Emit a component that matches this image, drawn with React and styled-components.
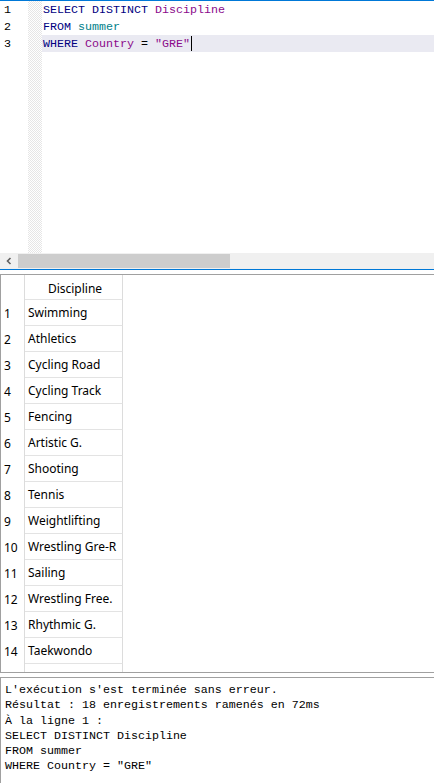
import React from "react";
import styled, { createGlobalStyle } from "styled-components";

const Global = createGlobalStyle`
  html, body { margin: 0; padding: 0; background: #fff; }
  body { width: 434px; height: 783px; overflow: hidden; }
  #root { width: 434px; height: 783px; }
`;

const Page = styled.div`
  width: 434px;
  height: 783px;
  display: flex;
  flex-direction: column;
  background: #fff;
`;

const EditorFrame = styled.div`
  height: 270px;
  box-sizing: border-box;
  border-top: 1px solid #0078d7;
  border-bottom: 1px solid #0078d7;
  display: flex;
  flex-direction: column;
`;

const CodeArea = styled.div`
  height: 252px;
  display: flex;
  overflow: hidden;
`;

const Gutter = styled.div`
  width: 28px;
  flex: none;
  background: #fff;
`;

const FoldMargin = styled.div`
  width: 14px;
  flex: none;
  background: repeating-conic-gradient(#e6e6e6 0 25%, #fff 0 50%) 0 0 / 2px 2px;
`;

const Mono = `
  font-family: "Liberation Mono", "Courier New", monospace;
  font-size: 11.66px;
`;

const LineNo = styled.div`
  ${Mono}
  height: 17px;
  line-height: 18px;
  padding-left: 4px;
  color: #000;
`;

const Code = styled.div`
  flex: 1;
  display: flex;
  flex-direction: column;
`;

const CodeLine = styled.div`
  ${Mono}
  height: 17px;
  line-height: 18px;
  padding-left: 1px;
  white-space: pre;
  color: #000;
  background: ${(p) => (p.$active ? "#eaeaf2" : "transparent")};
`;

const Tok = styled.span`
  color: ${(p) =>
    p.$k === "kw" ? "#00007f" : p.$k === "id" ? "#8b0a8b" : p.$k === "tbl" ? "#00808a" : p.$k === "str" ? "#8b0a8b" : "#000"};
`;

const Caret = styled.span`
  display: inline-block;
  width: 1px;
  height: 15px;
  margin-left: 1px;
  vertical-align: -4px;
  background: #000;
`;

const HScroll = styled.div`
  height: 16px;
  background: #f0f0f0;
  display: flex;
  align-items: stretch;
`;

const ArrowBtn = styled.div`
  width: 18px;
  flex: none;
  display: flex;
  align-items: center;
  justify-content: center;
`;

const Thumb = styled.div`
  width: 212px;
  margin: 1px 0;
  background: #cdcdcd;
`;

const Splitter = styled.div`
  height: 4px;
  flex: none;
`;

const GridPanel = styled.div`
  height: 399px;
  box-sizing: border-box;
  border-top: 1px solid #a0a0a0;
  border-bottom: 1px solid #a0a0a0;
  border-left: 1px solid #a0a0a0;
  overflow: hidden;
  font-family: "Noto Sans", "DejaVu Sans", sans-serif;
  font-size: 12px;
  color: #000;
`;

const GridRow = styled.div`
  display: grid;
  grid-template-columns: 24px 98px;
  height: ${(p) => (p.$header ? "25px" : "26px")};
`;

const RowHead = styled.div`
  box-sizing: border-box;
  border-right: 1px solid #dcdcdc;
  padding-left: 3px;
  display: flex;
  align-items: center;
`;

const Cell = styled.div`
  box-sizing: border-box;
  border-right: 1px solid #dcdcdc;
  border-bottom: 1px solid #e3e3e3;
  padding-left: 3px;
  padding-top: ${(p) => (p.$header ? "3px" : "0")};
  display: flex;
  align-items: center;
  justify-content: ${(p) => (p.$header ? "center" : "flex-start")};
  white-space: nowrap;
  overflow: hidden;
`;

const MsgPanel = styled.div`
  flex: 1;
  box-sizing: border-box;
  border-top: 1px solid #a0a0a0;
  border-left: 1px solid #a0a0a0;
  padding: 5px 0 0 4px;
  ${Mono}
  line-height: 15.3px;
  color: #000;
  white-space: pre;
`;

const rows = [
  "Swimming",
  "Athletics",
  "Cycling Road",
  "Cycling Track",
  "Fencing",
  "Artistic G.",
  "Shooting",
  "Tennis",
  "Weightlifting",
  "Wrestling Gre-R",
  "Sailing",
  "Wrestling Free.",
  "Rhythmic G.",
  "Taekwondo",
  "",
];

export default function App() {
  return (
    <Page>
      <Global />
      <EditorFrame>
        <CodeArea>
          <Gutter>
            <LineNo>1</LineNo>
            <LineNo>2</LineNo>
            <LineNo>3</LineNo>
          </Gutter>
          <FoldMargin />
          <Code>
            <CodeLine>
              <Tok $k="kw">SELECT DISTINCT</Tok>{" "}<Tok $k="id">Discipline</Tok>
            </CodeLine>
            <CodeLine>
              <Tok $k="kw">FROM</Tok>{" "}<Tok $k="tbl">summer</Tok>
            </CodeLine>
            <CodeLine $active>
              <Tok $k="kw">WHERE</Tok>{" "}<Tok $k="id">Country</Tok>{" = "}<Tok $k="str">"GRE"</Tok>
              <Caret />
            </CodeLine>
          </Code>
        </CodeArea>
        <HScroll>
          <ArrowBtn>
            <svg width="8" height="8" viewBox="0 0 8 8">
              <path d="M5.5 1 L2.5 4 L5.5 7" fill="none" stroke="#606060" strokeWidth="1.6" />
            </svg>
          </ArrowBtn>
          <Thumb />
        </HScroll>
      </EditorFrame>
      <Splitter />
      <GridPanel>
        <GridRow $header>
          <RowHead />
          <Cell $header>Discipline</Cell>
        </GridRow>
        {rows.map((r, i) => (
          <GridRow key={i}>
            <RowHead>{r ? i + 1 : ""}</RowHead>
            <Cell>{r}</Cell>
          </GridRow>
        ))}
      </GridPanel>
      <Splitter />
      <MsgPanel>
        {`L'exécution s'est terminée sans erreur.
Résultat : 18 enregistrements ramenés en 72ms
À la ligne 1 :
SELECT DISTINCT Discipline
FROM summer
WHERE Country = "GRE"`}
      </MsgPanel>
    </Page>
  );
}
